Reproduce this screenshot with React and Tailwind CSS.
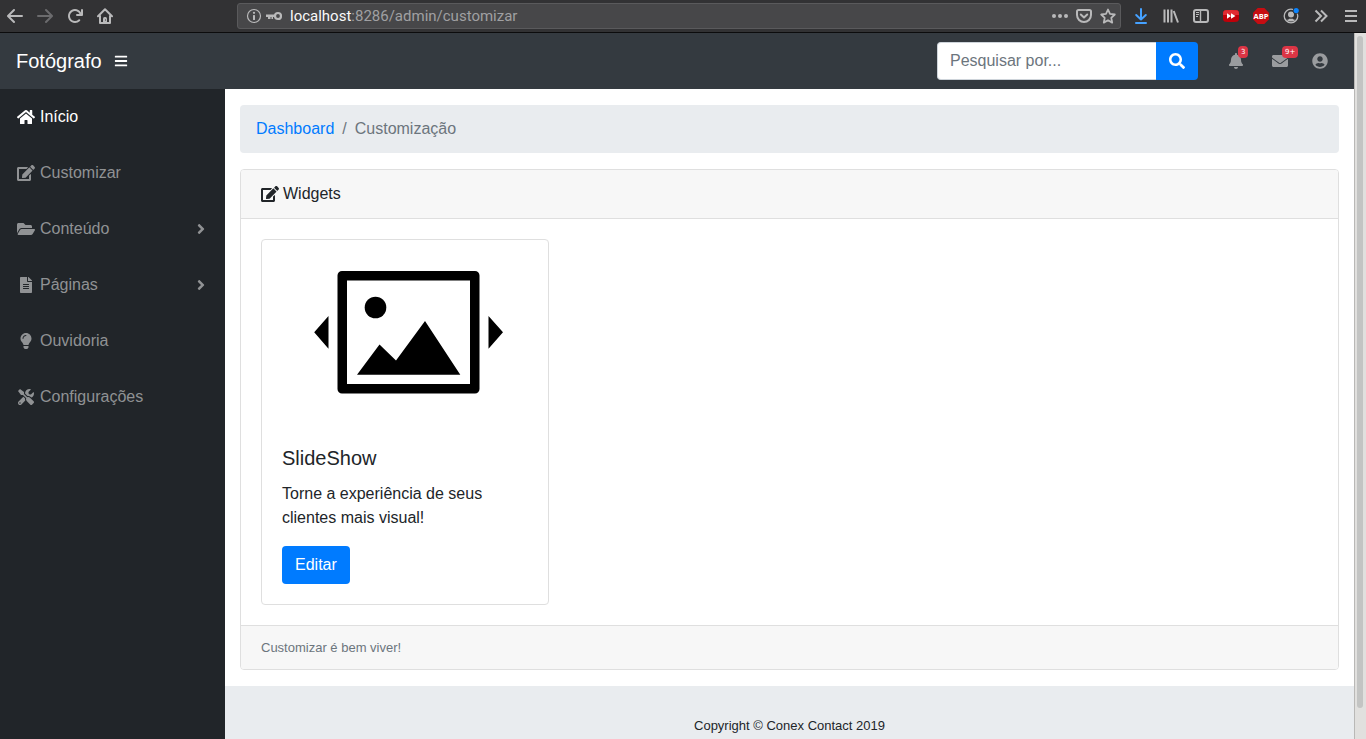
import {
  FaAngleRight,
  FaBars,
  FaBell,
  FaEdit,
  FaEnvelope,
  FaFileAlt,
  FaFolderOpen,
  FaHome,
  FaLightbulb,
  FaSearch,
  FaTools,
  FaUserCircle,
} from "react-icons/fa";

function Glyph({ children, className = "text-[#b9b9ba]" }) {
  return (
    <svg viewBox="0 0 16 16" className={`h-4 w-4 ${className}`} fill="currentColor" aria-hidden="true">
      {children}
    </svg>
  );
}

function ToolButton({ label, children }) {
  return (
    <button type="button" aria-label={label} className="flex h-8 w-[30px] shrink-0 items-center justify-center">
      {children}
    </button>
  );
}

const stroke = { fill: "none", stroke: "currentColor", strokeWidth: 2, strokeLinecap: "round", strokeLinejoin: "round" };

const ARROW =
  "M15 7H3.414l4.293-4.293a1 1 0 0 0-1.414-1.414l-6 6a1 1 0 0 0 0 1.414l6 6a1 1 0 0 0 1.414-1.414L3.414 9H15a1 1 0 0 0 0-2z";

function BrowserBar() {
  return (
    <div className="flex h-[33px] shrink-0 items-start border-b border-[#0c0c0d] bg-[#323234]">
      <ToolButton label="Voltar">
        <Glyph><path d={ARROW} /></Glyph>
      </ToolButton>
      <ToolButton label="Avançar">
        <Glyph className="text-[#6b6b6d]"><path d={ARROW} transform="matrix(-1 0 0 1 16 0)" /></Glyph>
      </ToolButton>
      <ToolButton label="Recarregar">
        <Glyph>
          <path d="M15 1a1 1 0 0 0-1 1v2.418A6.995 6.995 0 1 0 8 15a6.954 6.954 0 0 0 4.95-2.05 1 1 0 0 0-1.414-1.414A5.019 5.019 0 1 1 12.549 6H10a1 1 0 0 0 0 2h5a1 1 0 0 0 1-1V2a1 1 0 0 0-1-1z" />
        </Glyph>
      </ToolButton>
      <ToolButton label="Página inicial">
        <Glyph>
          <path d="M1 8.2 8 1.3l7 6.9M3 8v7h10V8" {...stroke} />
          <path d="M6 15v-4.500a1.500 1.500 0 0 1 1.500-1.500h1a1.500 1.500 0 0 1 1.500 1.500V15z" />
          <rect x="8" y="11.500" width="1" height="1" fill="#323234" />
        </Glyph>
      </ToolButton>

      <div className="mt-[3px] mr-[5px] ml-[117px] flex h-[26px] min-w-0 flex-1 items-center rounded-[3px] border border-[#5a5a5c] bg-[#474749] pr-1 pl-2">
        <Glyph>
          <circle cx="8" cy="8" r="6.500" fill="none" stroke="currentColor" strokeWidth="1.200" />
          <rect x="7" y="7" width="2" height="5" rx=".5" />
          <circle cx="8" cy="4.800" r="1.150" />
        </Glyph>
        <Glyph className="ml-1 text-[#b9b9ba]">
          <path d="M0 6.500h9v2.500H7v2H5.500V9H4.500v2H2V9H0z" />
          <circle cx="12" cy="8" r="3" fill="none" stroke="currentColor" strokeWidth="2.200" />
        </Glyph>
        <div className="ml-2 min-w-0 flex-1 font-[Roboto,'Noto_Sans',sans-serif] text-[15px] leading-6 text-[#a0a0a2]">
          <span className="text-[#f9f9fa]">localhost</span>:8286/admin/customizar
        </div>
        <div className="flex gap-2">
          <button type="button" aria-label="Ações da página">
            <Glyph><circle cx="2" cy="8" r="2" /><circle cx="8" cy="8" r="2" /><circle cx="14" cy="8" r="2" /></Glyph>
          </button>
          <button type="button" aria-label="Salvar no Pocket">
            <Glyph>
              <path d="M2.500 2h11A1.500 1.500 0 0 1 15 3.500V7A7 7 0 0 1 1 7V3.500A1.500 1.500 0 0 1 2.500 2z" {...stroke} />
              <path d="m4.800 6.500 3.200 3 3.200-3" {...stroke} />
            </Glyph>
          </button>
          <button type="button" aria-label="Favoritar">
            <Glyph>
              <path d="m8 1.500 2 4.400 4.800.6-3.500 3.300.9 4.800L8 12.200l-4.200 2.400.9-4.800L1.200 6.500 6 5.900z" {...stroke} strokeWidth="1.800" />
            </Glyph>
          </button>
        </div>
      </div>

      <ToolButton label="Downloads">
        <Glyph className="text-[#45a1ff]">
          <path d="M8 1v10M3.200 7 8 11.500 12.800 7M3 15h10" {...stroke} />
        </Glyph>
      </ToolButton>
      <ToolButton label="Biblioteca">
        <Glyph><path d="M1.500 1.500v13M5 1.500v13M8.500 1.500v13M10.700 3l4.300 11.500" {...stroke} strokeLinecap="butt" /></Glyph>
      </ToolButton>
      <ToolButton label="Painel lateral">
        <Glyph>
          <rect x="1" y="2" width="14" height="12" rx="2" {...stroke} />
          <path d="M7.500 2v12" {...stroke} strokeWidth="1.400" />
          <path d="M3 4.500h3M3 6.500h3M3 8.500h2" {...stroke} strokeWidth="1" strokeLinecap="butt" />
        </Glyph>
      </ToolButton>
      <ToolButton label="Extensão de vídeo">
        <Glyph>
          <path d="M2.500 2.300Q8 1.500 13.500 2.300 16 2.600 16 5.500v5q0 2.900-2.500 3.200-5.500.8-11 0Q0 13.400 0 10.500v-5Q0 2.600 2.500 2.300z" fill="#c00009" />
          <path d="M2.500 2.300Q8 1.500 13.500 2.300 16 2.600 16 5.500V7H0V5.500Q0 2.600 2.500 2.300z" fill="#e02b32" />
          <path d="M4 5.200 8 8l-4 2.800zM8 5.200 12.500 8 8 10.800z" fill="#fff" />
        </Glyph>
      </ToolButton>
      <ToolButton label="Adblock Plus">
        <Glyph className="text-[#c70d12]">
          <path d="M4.700 0h6.600L16 4.700v6.600L11.300 16H4.700L0 11.300V4.700z" />
          <text x="8" y="10.800" textAnchor="middle" fontSize="7.500" fontWeight="700" fontFamily="Open Sans, sans-serif" fill="#fff">ABP</text>
        </Glyph>
      </ToolButton>
      <ToolButton label="Conta">
        <Glyph>
          <circle cx="8" cy="8" r="6.800" fill="none" stroke="currentColor" strokeWidth="1.300" />
          <circle cx="8" cy="6.500" r="3" />
          <path d="M3.200 11.500q2 1 3-.8h3.600q1 1.800 3 .8A6 6 0 0 1 8 13.500a6 6 0 0 1-4.800-2z" />
          <circle cx="13.200" cy="2.600" r="3.400" fill="#323234" />
          <circle cx="13.200" cy="2.600" r="2.600" fill="#0a84ff" />
        </Glyph>
      </ToolButton>
      <ToolButton label="Mais ferramentas">
        <Glyph><path d="m2.500 2.500 5.500 5.500-5.500 5.500M8 2.500l5.500 5.500L8 13.500" {...stroke} strokeLinecap="butt" strokeLinejoin="miter" /></Glyph>
      </ToolButton>
      <ToolButton label="Menu">
        <Glyph><path d="M2 3h12M2 8h12M2 13h12" {...stroke} strokeLinecap="butt" /></Glyph>
      </ToolButton>
    </div>
  );
}

function Badge({ children }) {
  return (
    <span className="absolute top-[13px] left-5 rounded-[4px] bg-[#dc3545] px-[3px] font-['DejaVu_Sans',sans-serif] text-[7px] leading-[12px] text-white">
      {children}
    </span>
  );
}

function NavIcon({ label, badge, className = "", children }) {
  return (
    <li className={className}>
      <a href="#" aria-label={label} className="relative flex h-14 w-9 items-center justify-center text-[#9a9c9f]">
        {children}
        {badge && <Badge>{badge}</Badge>}
      </a>
    </li>
  );
}

function Navbar() {
  return (
    <header className="flex h-14 shrink-0 items-center bg-[#343a40] px-4">
      <a href="#" className="text-xl text-white">Fotógrafo</a>
      <button type="button" aria-label="Alternar menu" className="ml-3 text-white">
        <FaBars className="h-[14px] w-[14px]" />
      </button>
      <form className="ml-auto flex" onSubmit={(e) => e.preventDefault()}>
        <input
          type="text"
          aria-label="Pesquisar por"
          placeholder="Pesquisar por..."
          className="h-[38px] w-[219px] rounded-l-[4px] border border-r-0 border-[#ced4da] bg-white px-3 text-base text-[#495057] outline-none placeholder:text-[#6c757d]"
        />
        <button type="submit" aria-label="Pesquisar" className="flex h-[38px] w-[42px] items-center justify-center rounded-r-[4px] bg-[#007bff] text-white">
          <FaSearch className="h-4 w-4" />
        </button>
      </form>
      <ul className="ml-5 flex gap-1">
        <NavIcon label="Alertas" badge="3" className="mr-1"><FaBell className="h-4 w-4" /></NavIcon>
        <NavIcon label="Mensagens" badge="9+"><FaEnvelope className="h-4 w-4" /></NavIcon>
        <NavIcon label="Usuário"><FaUserCircle className="h-4 w-4" /></NavIcon>
      </ul>
    </header>
  );
}

const MENU = [
  { label: "Início", Icon: FaHome, size: "h-4 w-[18px]", active: true },
  { label: "Customizar", Icon: FaEdit, size: "h-4 w-[18px]" },
  { label: "Conteúdo", Icon: FaFolderOpen, size: "h-4 w-[18px]", nested: true },
  { label: "Páginas", Icon: FaFileAlt, size: "h-4 w-4", nested: true },
  { label: "Ouvidoria", Icon: FaLightbulb, size: "h-4 w-4" },
  { label: "Configurações", Icon: FaTools, size: "h-4 w-4" },
];

function Sidebar() {
  return (
    <nav className="w-[225px] shrink-0 bg-[#212529]">
      <ul>
        {MENU.map(({ label, Icon, size, active, nested }) => (
          <li key={label}>
            <a href="#" className={`flex items-center p-4 ${active ? "text-white" : "text-[#909294]"}`}>
              <span className="mr-1 flex w-5 justify-center"><Icon className={size} /></span>
              {label}
              {nested && <FaAngleRight className="ml-auto h-4 w-4" />}
            </a>
          </li>
        ))}
      </ul>
    </nav>
  );
}

function SlideshowArt() {
  return (
    <svg viewBox="0 0 286 186" className="block w-full" role="img" aria-label="SlideShow">
      <path
        fillRule="evenodd"
        d="M80 31H213a4.500 4.500 0 0 1 4.500 4.500V149a4.500 4.500 0 0 1-4.500 4.500H80a4.500 4.500 0 0 1-4.500-4.500V35.500A4.500 4.500 0 0 1 80 31zM85 40.500V144H208V40.500z"
      />
      <circle cx="113.500" cy="67.500" r="10.800" />
      <path d="M95 134.700 117.500 104.500 134 120.500 163 81 198.300 134.700zM52.200 92.200 66.500 76V108.700zM241 92.200 226.500 76V108.700z" />
    </svg>
  );
}

function Content() {
  return (
    <main className="px-[15px] pt-4">
      <ol className="mb-4 flex rounded-[4px] bg-[#e9ecef] px-4 py-3">
        <li><a href="#" className="text-[#007bff]">Dashboard</a></li>
        <li className="pl-2 text-[#6c757d]"><span className="pr-2">/</span>Customização</li>
      </ol>
      <section className="mb-4 rounded-[4px] border border-[#dfdfdf]">
        <div className="flex items-center gap-1 rounded-t-[3px] border-b border-[#dfdfdf] bg-[#f7f7f7] px-5 py-3">
          <FaEdit className="h-4 w-[18px]" />
          Widgets
        </div>
        <div className="p-5">
          <article className="w-72 rounded-[4px] border border-[#dfdfdf]">
            <SlideshowArt />
            <div className="p-5">
              <h5 className="mb-3 text-xl leading-6">SlideShow</h5>
              <p className="mb-4">Torne a experiência de seus clientes mais visual!</p>
              <a href="#" className="inline-block rounded-[4px] bg-[#007bff] px-[13px] py-[7px] align-top text-white">Editar</a>
            </div>
          </article>
        </div>
        <div className="rounded-b-[3px] border-t border-[#dfdfdf] bg-[#f7f7f7] px-5 py-3 text-[13px] leading-[19px] text-[#6c757d]">
          Customizar é bem viver!
        </div>
      </section>
    </main>
  );
}

export default function App() {
  return (
    <div className="flex h-screen flex-col overflow-hidden bg-white font-['Liberation_Sans',Arial,sans-serif] text-base text-[#212529]">
      <BrowserBar />
      <div className="flex min-h-0 flex-1">
        <div className="flex min-w-0 flex-1 flex-col overflow-hidden">
          <Navbar />
          <div className="flex flex-1">
            <Sidebar />
            <div className="flex min-w-0 flex-1 flex-col">
              <Content />
              <footer className="mt-auto flex h-20 shrink-0 items-center justify-center bg-[#e9ecef] text-[13px]">
                Copyright © Conex Contact 2019
              </footer>
            </div>
          </div>
        </div>
        <div className="w-3 shrink-0 border-l border-[#b9b8b6] bg-[#e1e0de] pt-[3px] pr-[3px] pb-[31px] pl-[2px]" aria-hidden="true">
          <div className="h-full rounded-full bg-[#c3c4c3]" />
        </div>
      </div>
    </div>
  );
}
